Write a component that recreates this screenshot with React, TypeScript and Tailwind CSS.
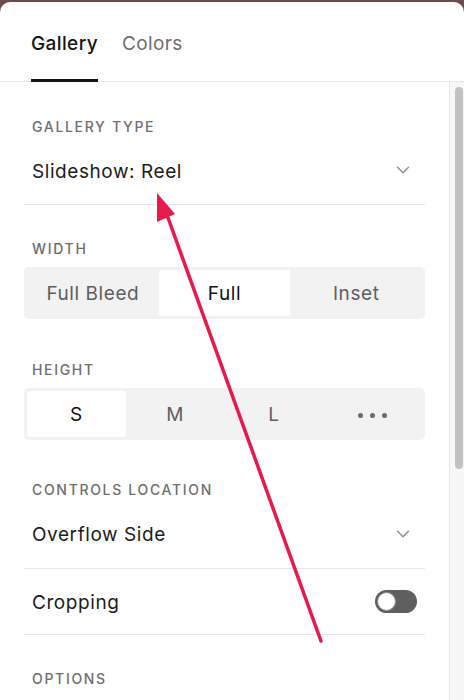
import { ChevronDown } from "lucide-react";

function SectionLabel({ text, top }: { text: string; top: string }) {
  return (
    <div className={`${top} flex h-[20px] items-center pl-[8px] text-[14px] font-medium uppercase tracking-[0.12em] text-[#6e6e6e]`}>
      {text}
    </div>
  );
}

function Dropdown({ value, h }: { value: string; h: string }) {
  return (
    <div className={`${h} flex items-center justify-between border-b border-[#e6e6e6] pl-[8px] pr-[11px]`}>
      <span className="pt-[4px] text-[19px] tracking-[0.03em] text-[#1b1b1b]">{value}</span>
      <ChevronDown className="h-[22px] w-[22px] text-[#8a8a8a]" strokeWidth={1.4} />
    </div>
  );
}

function Segmented({ items, active }: { items: string[]; active: number }) {
  return (
    <div className="mt-[9px] flex h-[52px] rounded-[5px] bg-[#f2f2f2] p-[3px]">
      {items.map((item, i) => (
        <div
          key={item}
          className={
            "flex flex-1 items-center justify-center rounded-[3px] pt-[2px] text-[19px] tracking-[0.03em] " +
            (i === active ? "bg-white text-[#111]" : "text-[#5e5e5e]")
          }
        >
          {item === "..." ? (
            <span className="flex gap-[7px]">
              <span className="h-[5px] w-[5px] rounded-full bg-[#6a6a6a]" />
              <span className="h-[5px] w-[5px] rounded-full bg-[#6a6a6a]" />
              <span className="h-[5px] w-[5px] rounded-full bg-[#6a6a6a]" />
            </span>
          ) : (
            item
          )}
        </div>
      ))}
    </div>
  );
}

export default function App() {
  return (
    <div className="relative h-[700px] w-[464px] overflow-hidden bg-[#6b4a4a] pt-[2px]" style={{ fontFamily: "Inter, 'Noto Sans', sans-serif" }}>
      <div className="flex h-[698px] flex-col rounded-t-[10px] bg-white">
        {/* tabs */}
        <div className="flex h-[80px] items-end gap-[24px] border-b border-[#e8e8e8] px-[31px]">
          <div className="flex h-full flex-col justify-between">
            <span className="pt-[28px] text-[19px] font-medium tracking-[0.02em] text-[#141414]">Gallery</span>
            <div className="-mb-px h-[3px] bg-[#141414]" />
          </div>
          <div className="flex h-full flex-col">
            <span className="pt-[28px] text-[19px] tracking-[0.02em] text-[#6e6e6e]">Colors</span>
          </div>
        </div>

        <div className="flex min-h-0 flex-1">
          <div className="flex-1 px-[24px]">
            <SectionLabel text="Gallery Type" top="mt-[34px]" />
            <Dropdown value="Slideshow: Reel" h="h-[69px]" />

            <SectionLabel text="Width" top="mt-[33px]" />
            <Segmented items={["Full Bleed", "Full", "Inset"]} active={1} />

            <SectionLabel text="Height" top="mt-[40px]" />
            <Segmented items={["S", "M", "L", "..."]} active={0} />

            <SectionLabel text="Controls Location" top="mt-[39px]" />
            <Dropdown value="Overflow Side" h="h-[70px]" />
            <div className="flex h-[66px] items-center justify-between border-b border-[#e6e6e6] pl-[8px] pr-[8px]">
              <span className="pt-[3px] text-[19px] tracking-[0.03em] text-[#1b1b1b]">Cropping</span>
              <div className="flex h-[23px] w-[42px] items-center rounded-full bg-[#5f5f5f] px-[2px]">
                <div className="h-[19px] w-[19px] rounded-full border border-[#8a8a8a] bg-white" />
              </div>
            </div>

            <SectionLabel text="Options" top="mt-[33px]" />
          </div>

          {/* scrollbar */}
          <div className="w-[15px] border-l border-[#e6e6e6] bg-[#f7f7f7] pl-[5px] pt-[5px]">
            <div className="h-[382px] w-[8px] rounded-full bg-[#c2c2c2]" />
          </div>
        </div>
      </div>

      {/* annotation arrow */}
      <svg className="pointer-events-none absolute left-0 top-0" width="464" height="700" viewBox="0 0 464 700">
        <line x1="321" y1="641" x2="167" y2="215" stroke="#e8194b" strokeWidth="3.5" strokeLinecap="round" />
        <polygon points="157,193 157,222 175,214" fill="#e8194b" />
      </svg>
    </div>
  );
}
